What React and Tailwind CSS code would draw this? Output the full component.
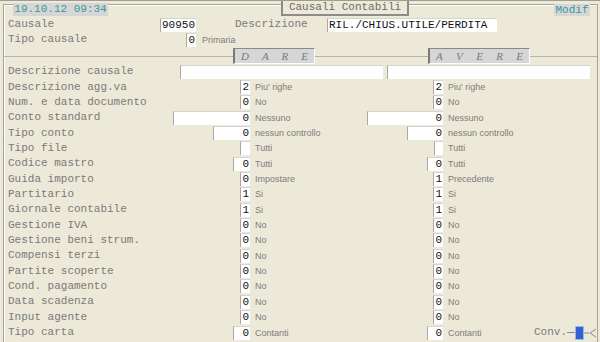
const mono = "font-['Liberation_Mono','Courier_New',monospace]";
const sans = "font-['Liberation_Sans',Arial,sans-serif]";
const lbl = `${mono} text-[11px] text-[#7a7a7a] leading-none whitespace-nowrap`;

const ROWS = [
  { label: 'Descrizione agg.va', d: ['2', "Piu' righe", 10], a: ['2', "Piu' righe", 10] },
  { label: 'Num. e data documento', d: ['0', 'No', 10], a: ['0', 'No', 10] },
  { label: 'Conto standard', d: ['0', 'Nessuno', 77], a: ['0', 'Nessuno', 76] },
  { label: 'Tipo conto', d: ['0', 'nessun controllo', 37], a: ['0', 'nessun controllo', 36] },
  { label: 'Tipo file', d: ['', 'Tutti', 10], a: ['', 'Tutti', 9] },
  { label: 'Codice mastro', d: ['0', 'Tutti', 17], a: ['0', 'Tutti', 16] },
  { label: 'Guida importo', d: ['0', 'Impostare', 10], a: ['1', 'Precedente', 10] },
  { label: 'Partitario', d: ['1', 'Si', 10], a: ['1', 'Si', 10] },
  { label: 'Giornale contabile', d: ['1', 'Si', 10], a: ['1', 'Si', 10] },
  { label: 'Gestione IVA', d: ['0', 'No', 10], a: ['0', 'No', 10] },
  { label: 'Gestione beni strum.', d: ['0', 'No', 10], a: ['0', 'No', 10] },
  { label: 'Compensi terzi', d: ['0', 'No', 10], a: ['0', 'No', 10] },
  { label: 'Partite scoperte', d: ['0', 'No', 10], a: ['0', 'No', 10] },
  { label: 'Cond. pagamento', d: ['0', 'No', 10], a: ['0', 'No', 10] },
  { label: 'Data scadenza', d: ['0', 'No', 10], a: ['0', 'No', 10] },
  { label: 'Input agente', d: ['0', 'No', 10], a: ['0', 'No', 10] },
  { label: 'Tipo carta', d: ['0', 'Contanti', 17], a: ['0', 'Contanti', 16] },
];

function Field({ value, width, left }) {
  return (
    <div
      className={`h-[14px] bg-white border-l border-t border-l-[#a8a8a8] border-t-[#d4d4d4] flex items-center ${left ? 'justify-start pl-[1px]' : 'justify-end pr-[1px]'} ${mono} text-[11px] text-[#111] leading-none`}
      style={{ width }}
    >
      {value}
    </div>
  );
}

function Hint({ children }) {
  return <span className={`${sans} text-[9px] text-[#7c7c7c] leading-none relative -top-[3px]`}>{children}</span>;
}

function Spaced({ letters }) {
  return (
    <div className="h-[16px] bg-[#d6d6d6] border-l-2 border-t border-l-[#7a7a7a] border-t-[#8a8a8a] border-r border-b border-r-white border-b-white flex items-center justify-between px-[6px]">
      {letters.map((l, i) => (
        <span key={i} className="font-['Liberation_Serif',serif] italic text-[11px] text-[#7a7a7a] leading-none">{l}</span>
      ))}
    </div>
  );
}

export default function App() {
  return (
    <div className="relative w-[600px] h-[342px] overflow-hidden bg-[#ece9d8] border-t border-[#a09c90]">
      {/* frame */}
      <div className="mt-[3px] ml-[3px] mr-[2px] h-[340px] border-l border-t border-r border-[#a4a4a0] shadow-[inset_1px_1px_0_#ffffff]">
        <div className="pt-[12px]">
          {/* Causale */}
          <div className="flex items-center h-[15px] pl-[4px]">
            <div className={`w-[152px] ${lbl}`}>Causale</div>
            <Field value="90950" width={36} />
            <div className={`ml-[39px] w-[92px] ${lbl}`}>Descrizione</div>
            <Field value="RIL./CHIUS.UTILE/PERDITA" width={170} left />
          </div>
          {/* Tipo causale */}
          <div className="flex items-center h-[15px] pl-[4px]">
            <div className={`w-[178px] ${lbl}`}>Tipo causale</div>
            <Field value="0" width={10} />
            <div className="pl-[6px]"><Hint>Primaria</Hint></div>
          </div>
          {/* separator */}
          <div className="flex items-center h-[17px] pt-[1px]">
            <div className="w-[229px] h-px bg-[#b4b4ae]" />
            <div className="w-[82px]"><Spaced letters={['D', 'A', 'R', 'E']} /></div>
            <div className="w-[113px] h-px bg-[#b4b4ae]" />
            <div className="w-[102px]"><Spaced letters={['A', 'V', 'E', 'R', 'E']} /></div>
            <div className="flex-1 h-px bg-[#b4b4ae]" />
          </div>
          {/* Descrizione causale */}
          <div className="flex items-center h-[15.35px] pl-[4px]">
            <div className={`w-[172px] ${lbl}`}>Descrizione causale</div>
            <Field value="" width={203} />
            <div className="ml-[4px]"><Field value="" width={203} /></div>
          </div>
          {ROWS.map((r, i) => (
            <div key={r.label} className="flex items-center h-[15.35px] pl-[4px]">
              <div className={`w-[165px] ${lbl}`}>{r.label}</div>
              <div className="w-[77px] flex justify-end"><Field value={r.d[0]} width={r.d[2]} /></div>
              <div className="w-[117px] pl-[5px] whitespace-nowrap"><Hint>{r.d[1]}</Hint></div>
              <div className="w-[76px] flex justify-end"><Field value={r.a[0]} width={r.a[2]} /></div>
              <div className="pl-[5px] whitespace-nowrap"><Hint>{r.a[1]}</Hint></div>
              {i === ROWS.length - 1 && (
                <div className="ml-auto flex items-center">
                  <span className={lbl}>Conv.</span>
                  <div className="w-[8px] h-px bg-[#8a8a8a]" />
                  <div className="w-[9px] h-[14px] bg-[#2f62d2] border border-[#9fb6e6]" />
                  <svg width="13" height="10" viewBox="0 0 13 10" className="block">
                    <path d="M0 5H5" stroke="#8a8a8a" strokeWidth="1" />
                    <path d="M12 1L6 5L12 9" stroke="#8a8a8a" strokeWidth="1" fill="none" />
                  </svg>
                </div>
              )}
            </div>
          ))}
        </div>
      </div>

      {/* titles on frame */}
      <div className={`absolute left-[13px] top-[2px] w-[95px] h-[13px] bg-[#d6d6d6] flex items-center justify-center ${mono} text-[11px] text-[#36999a] leading-none`}>
        19.10.12 09:34
      </div>
      <div className={`absolute left-[281px] top-0 w-[128px] h-[15px] bg-[#ece9d8] border-l-2 border-r-2 border-b-2 border-[#8c8c8c] flex items-center justify-center ${mono} text-[11px] text-[#6c6c6c] leading-none`}>
        Causali Contabili
      </div>
      <div className={`absolute left-[554px] top-[3px] w-[36px] h-[12px] bg-[#d6d6d6] flex items-center justify-center ${mono} text-[11px] text-[#36999a] leading-none`}>
        Modif
      </div>
    </div>
  );
}
